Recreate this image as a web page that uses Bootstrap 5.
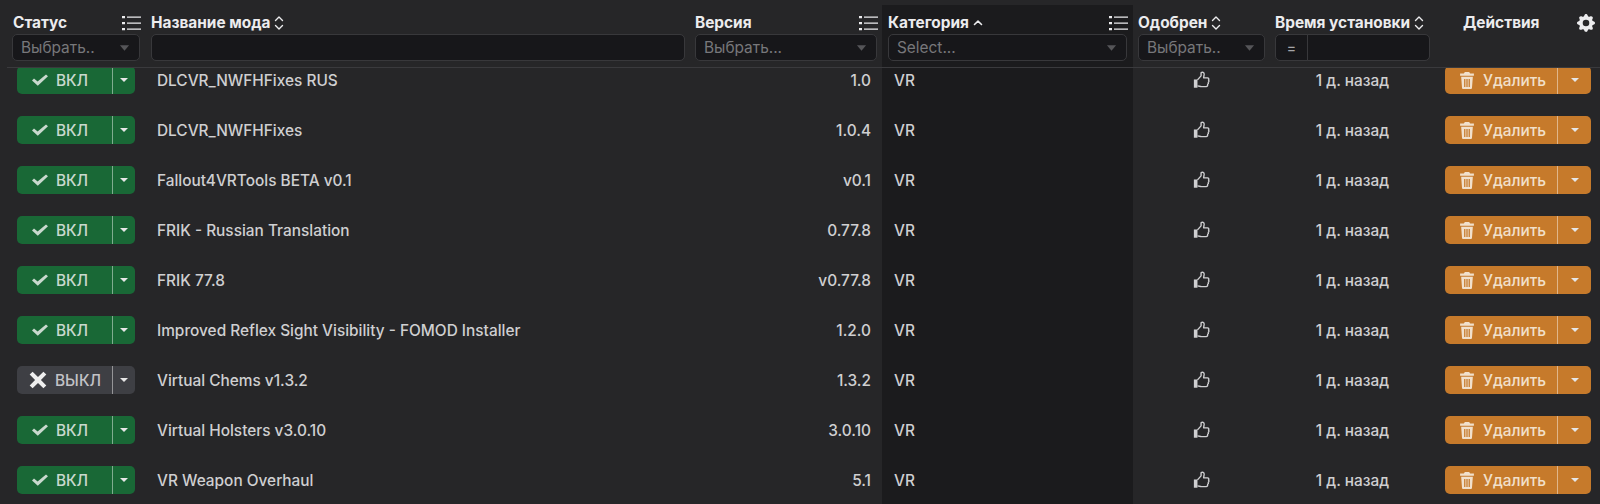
<!DOCTYPE html>
<html lang="ru">
<head>
<meta charset="UTF-8">
<meta name="viewport" content="width=device-width, initial-scale=1.0">
<title>Моды</title>
<link rel="stylesheet" href="https://cdn.jsdelivr.net/npm/bootstrap@5.3.0/dist/css/bootstrap.min.css">
<script src="https://cdn.jsdelivr.net/npm/bootstrap@5.3.0/dist/js/bootstrap.bundle.min.js"></script>
<style>
html, body { height: 100%; overflow: hidden; background: #262628; }
body { font-family: Inter, "Noto Sans", sans-serif; font-size: 15.4px; color: #cfcfd1; }
.mods-scroll { height: 504px; padding-left: 7px; overflow: auto; scrollbar-width: none; }
.mods-table { width: 1593px; margin: 0; table-layout: fixed; border-collapse: separate; border-spacing: 0; font-size: 15.4px; --bs-table-bg: transparent; --bs-table-color: #cfcfd1; --bs-table-border-color: transparent; }
.mods-table thead th { position: sticky; top: 0; z-index: 2; padding: 5px 5px 6px; background: #262628; border-top: 5px solid #262628; border-bottom: 1px solid #3a3a3d; font-weight: 700; color: #ececee; vertical-align: top; }
.mods-table thead th.cat-col { background: #1b1b1d; padding-left: 6px; padding-right: 6px; }
.mods-table thead th.name-col { padding-left: 6px; }
.mods-table tbody td { height: 50px; padding: 0 6px; vertical-align: middle; font-weight: 500; white-space: nowrap; border: 0; }
.mods-table tbody td.cat-col { background: #1b1b1d; padding-left: 12px; }
.mods-table tbody td.name-col { padding-left: 12px; }
.mods-table tbody td.ver-col { padding-right: 11px; }
.mods-table tbody td.txt-cell { padding-top: 2px; }
.mods-table tbody td.thumb-cell { padding-bottom: 2px; }
.head-line { height: 24px; padding-top: 2px; white-space: nowrap; }
.head-line svg { color: #ececee; }
.head-line .list-ico { margin-right: -1px; }
.status-head { margin-left: 1px; }
.action-head { margin-left: 23px; }
.filter-select, .filter-input { height: 27px; min-height: 27px; background-color: #17171a; border: 1px solid #38383b; border-radius: 5px; color: #77777b; font-size: 15.4px; box-shadow: none; }
.filter-select { padding: 1px 8px 0; background-image: url("data:image/svg+xml,%3csvg xmlns='http://www.w3.org/2000/svg' viewBox='0 0 12 6'%3e%3cpath fill='%23555558' d='M1 0h10L6 6z'/%3e%3c/svg%3e"); background-size: 11px 6px; background-position: right 9px center; }
.filter-input { padding: 0 8px; }
.eq-sign { height: 27px; width: 33px; padding: 0; justify-content: center; background: #17171a; border: 1px solid #38383b; border-radius: 5px 0 0 5px; color: #a5a5a8; font-size: 14px; font-weight: 500; }
.mods-table .input-group .filter-input { border-radius: 0 5px 5px 0; }
.state-group { width: 118px; margin-left: 4px; display: flex; }
.del-group { width: 146px; margin-left: 4px; display: flex; }
.btn-group > .act-btn { height: 28px; padding: 0; display: inline-flex; align-items: center; justify-content: center; border: 0; font-size: 15.4px; font-weight: 500; --bs-btn-border-radius: 5px; }
.btn-group > .act-main { flex: 1 1 auto; gap: 8px; }
.btn-group > .act-main span { padding-top: 2px; }
.btn-group > .act-main.on-btn { padding-right: 10px; }
.btn-group > .act-main.del-btn { padding-left: 2px; }
.btn-group > .act-caret { flex: 0 0 34px; border-left: 1px solid rgba(255,255,255,.45); }
.btn-group.state-group > .act-caret { flex-basis: 23px; }
.act-caret::after { margin: 0; border-top: 4px solid; border-right: 4px solid transparent; border-left: 4px solid transparent; border-bottom: 0; color: #e6e6e6; }
.on-btn { background: #196836; color: #c9d9ce; }
.off-btn { background: #3e3f44; color: #c2c2c6; }
.del-btn { background: #c67a2b; color: #f1e0cb; }
.on-btn:hover { background: #196836; color: #c9d9ce; }
.off-btn:hover { background: #3e3f44; color: #c2c2c6; }
.del-btn:hover { background: #c67a2b; color: #f1e0cb; }
</style>
</head>
<body>
<svg width="0" height="0" class="position-absolute">
  <symbol id="i-list" viewBox="0 0 19 16"><path fill="currentColor" d="M0 1h3v2.2H0zM0 7h3v2.2H0zM0 13h3v2.2H0zM5 1.4h14v1.4H5zM5 7.4h14v1.4H5zM5 13.4h14v1.4H5z"/></symbol>
  <symbol id="i-sort" viewBox="0 0 10 16"><path fill="none" stroke="currentColor" stroke-width="1.4" stroke-linecap="round" stroke-linejoin="round" d="M1.5 5.5 5 2l3.5 3.5M1.500 10.500 5 14l3.500-3.500"/></symbol>
  <symbol id="i-up" viewBox="0 0 10 8"><path fill="none" stroke="currentColor" stroke-width="1.6" stroke-linecap="round" stroke-linejoin="round" d="M1.500 5.500 5 2.200l3.500 3.300"/></symbol>
  <symbol id="i-check" viewBox="0 0 16 12"><path fill="currentColor" d="M0 6.600 2 4.600l3.600 3L14 .6l2 1.600L5.800 11.800z"/></symbol>
  <symbol id="i-cross" viewBox="0 0 16 16"><path fill="currentColor" d="M3.200.6 8 5.400 12.800.6 15.400 3.200 10.600 8l4.800 4.800-2.600 2.600L8 10.600 3.200 15.400.6 12.800 5.400 8 .6 3.200z"/></symbol>
  <symbol id="i-trash" viewBox="0 0 14 16"><path fill="currentColor" d="M5 0h4l1 1.500h3.500v2H.5v-2H4zM1.500 4.500h11l-.8 10.300c-.1.700-.5 1.200-1.200 1.200H3.500c-.7 0-1.100-.5-1.200-1.200zM4.300 6.500v7.500h1.200V6.500zM6.400 6.500v7.500h1.200V6.500zM8.500 6.500v7.500h1.200V6.500z"/></symbol>
  <symbol id="i-thumb" viewBox="0 0 16 17"><path fill="currentColor" d="M.8 8h3.400v7.800H.8z"/><path fill="none" stroke="currentColor" stroke-width="1.300" stroke-linejoin="round" d="M4.200 8.400 7.600 4.600V1.700C8.700.6 10.700 1.200 10.500 3.200L10 6.500h3.700c1.200 0 1.600 1.300.9 2 .6.700.5 1.800-.2 2.200.3.800 0 1.600-.6 1.900.2 1-.3 2.200-1.300 2.200H8.100c-1.600 0-2.500-.7-3.900-.7"/></symbol>
  <symbol id="i-gear" viewBox="0 0 16 16"><path fill="currentColor" d="M9.405 1.05c-.413-1.4-2.397-1.4-2.81 0l-.1.34a1.464 1.464 0 0 1-2.105.872l-.31-.17c-1.283-.698-2.686.705-1.987 1.987l.169.311c.446.82.023 1.841-.872 2.105l-.34.1c-1.4.413-1.4 2.397 0 2.81l.34.1a1.464 1.464 0 0 1 .872 2.105l-.17.31c-.698 1.283.705 2.686 1.987 1.987l.311-.169a1.464 1.464 0 0 1 2.105.872l.1.34c.413 1.4 2.397 1.4 2.81 0l.1-.34a1.464 1.464 0 0 1 2.105-.872l.31.17c1.283.698 2.686-.705 1.987-1.987l-.169-.311a1.464 1.464 0 0 1 .872-2.105l.34-.1c1.4-.413 1.4-2.397 0-2.81l-.34-.1a1.464 1.464 0 0 1-.872-2.105l.17-.31c.698-1.283-.705-2.686-1.987-1.987l-.311.169a1.464 1.464 0 0 1-2.105-.872l-.1-.34zM8 10.930a2.929 2.929 0 1 1 0-5.860 2.929 2.929 0 0 1 0 5.858z"/></symbol>
</svg>
<div class="mods-scroll" id="mods-scroll">
<table class="table mods-table">
  <colgroup>
    <col style="width:138px"><col style="width:545px"><col style="width:192px"><col style="width:251px"><col style="width:137px"><col style="width:165px"><col style="width:165px">
  </colgroup>
  <thead>
    <tr>
      <th>
        <div class="head-line d-flex justify-content-between align-items-center"><span class="status-head">Статус</span><svg class="list-ico" width="19" height="16"><use href="#i-list"/></svg></div>
        <select class="form-select filter-select"><option>Выбрать..</option></select>
      </th>
      <th class="name-col">
        <div class="head-line d-flex align-items-center gap-1"><span>Название мода</span><svg width="10" height="16"><use href="#i-sort"/></svg></div>
        <input class="form-control filter-input">
      </th>
      <th>
        <div class="head-line d-flex justify-content-between align-items-center"><span>Версия</span><svg class="list-ico" width="19" height="16"><use href="#i-list"/></svg></div>
        <select class="form-select filter-select"><option>Выбрать...</option></select>
      </th>
      <th class="cat-col">
        <div class="head-line d-flex justify-content-between align-items-center"><span class="d-flex align-items-center gap-1">Категория <svg width="10" height="8"><use href="#i-up"/></svg></span><svg class="list-ico" width="19" height="16"><use href="#i-list"/></svg></div>
        <select class="form-select filter-select"><option>Select...</option></select>
      </th>
      <th>
        <div class="head-line d-flex align-items-center gap-1"><span>Одобрен</span><svg width="10" height="16"><use href="#i-sort"/></svg></div>
        <select class="form-select filter-select"><option>Выбрать..</option></select>
      </th>
      <th>
        <div class="head-line d-flex align-items-center gap-1"><span>Время установки</span><svg width="10" height="16"><use href="#i-sort"/></svg></div>
        <div class="input-group flex-nowrap"><span class="input-group-text eq-sign">=</span><input class="form-control filter-input"></div>
      </th>
      <th>
        <div class="head-line d-flex justify-content-between align-items-center"><span class="action-head">Действия</span><svg width="18" height="18"><use href="#i-gear"/></svg></div>
      </th>
    </tr>
  </thead>
  <tbody id="mods-body"></tbody>
</table>
</div>
<script>
const mods = [
  ['DLCVR_NWFHFixes RUS', '1.0', true],
  ['DLCVR_NWFHFixes', '1.0.4', true],
  ['Fallout4VRTools BETA v0.1', 'v0.1', true],
  ['FRIK - Russian Translation', '0.77.8', true],
  ['FRIK 77.8', 'v0.77.8', true],
  ['Improved Reflex Sight Visibility - FOMOD Installer', '1.2.0', true],
  ['Virtual Chems v1.3.2', '1.3.2', false],
  ['Virtual Holsters v3.0.10', '3.0.10', true],
  ['VR Weapon Overhaul', '5.1', true]
];

const tbody = document.getElementById('mods-body');
mods.forEach(([name, version, enabled]) => {
  const cls = enabled ? 'on-btn' : 'off-btn';
  const icon = enabled
    ? '<svg width="16" height="12"><use href="#i-check"/></svg>'
    : '<svg width="18" height="18" style="color:#eee"><use href="#i-cross"/></svg>';
  const tr = document.createElement('tr');
  tr.innerHTML = `
    <td><div class="btn-group state-group">
      <button class="btn act-btn act-main ${cls}">${icon}<span>${enabled ? 'ВКЛ' : 'ВЫКЛ'}</span></button>
      <button class="btn act-btn act-caret dropdown-toggle dropdown-toggle-split ${cls}"></button>
    </div></td>
    <td class="name-col txt-cell">${name}</td>
    <td class="text-end ver-col txt-cell">${version}</td>
    <td class="cat-col txt-cell">VR</td>
    <td class="text-center thumb-cell"><svg width="17" height="18"><use href="#i-thumb"/></svg></td>
    <td class="text-center txt-cell">1 д. назад</td>
    <td><div class="btn-group del-group">
      <button class="btn act-btn act-main del-btn"><svg width="16" height="17"><use href="#i-trash"/></svg><span>Удалить</span></button>
      <button class="btn act-btn act-caret dropdown-toggle dropdown-toggle-split del-btn"></button>
    </div></td>`;
  tbody.appendChild(tr);
});

// list is scrolled a little under the sticky header
document.getElementById('mods-scroll').scrollTop = 13;
</script>
</body>
</html>
